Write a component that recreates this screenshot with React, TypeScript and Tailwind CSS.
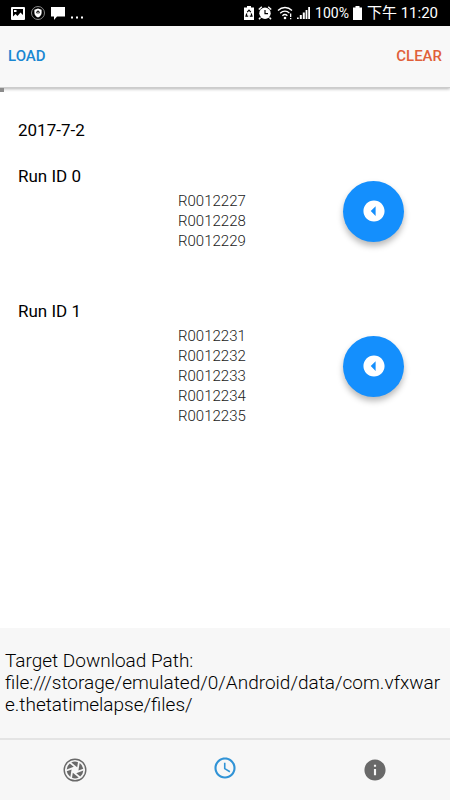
import React from 'react';
import {
  IoMdArrowDropleftCircle,
  IoMdInformationCircle,
  IoMdTime,
} from 'react-icons/io';

interface Run {
  id: number;
  files: string[];
}

const runs: Run[] = [
  { id: 0, files: ['R0012227', 'R0012228', 'R0012229'] },
  { id: 1, files: ['R0012231', 'R0012232', 'R0012233', 'R0012234', 'R0012235'] },
];

const targetPath = 'file:///storage/emulated/0/Android/data/com.vfxware.thetatimelapse/files/';

const bladeAngles = [0, 60, 120, 180, 240, 300];

function ApertureIcon() {
  return (
    <svg viewBox="0 0 24 24" className="h-6 w-6">
      <circle cx="12" cy="12" r="10.8" fill="none" stroke="currentColor" strokeWidth="1.4" />
      {bladeAngles.map((angle) => (
        <path
          key={angle}
          d="M8.3 4.5A8.4 8.4 0 0 1 15 4.200L14.200 9.300z"
          fill="currentColor"
          transform={`rotate(${angle} 12 12)`}
        />
      ))}
    </svg>
  );
}

function StatusBar() {
  return (
    <div className="flex h-[26px] shrink-0 items-center justify-between bg-black pl-[11px] pr-3 text-white">
      <div className="flex items-center gap-[6px]">
        <svg viewBox="0 0 14 13" className="h-[13px] w-[14px]">
          <rect width="14" height="13" rx="1" fill="white" />
          <path d="M2 2h10v6L9.5 5.5 6.5 9 4.5 7 2 9.5z" fill="black" />
          <path d="M3 3h2.5v2H3z" fill="white" />
        </svg>
        <svg viewBox="0 0 14 14" className="h-[14px] w-[14px]">
          <circle cx="7" cy="7" r="6.5" fill="none" stroke="#aaa" strokeWidth="0.8" />
          <path d="M7 2.6l3.6 1.2v3c0 2.2-1.4 3.8-3.6 4.8-2.2-1-3.6-2.6-3.6-4.8v-3z" fill="white" />
          <circle cx="7" cy="6.2" r="1.6" fill="black" />
          <path d="M6.5 5.8h1V9h-1z" fill="white" />
        </svg>
        <svg viewBox="0 0 14 14" className="h-[14px] w-[14px]">
          <path d="M0 1h14v9.5H6L3 14v-3.5H0z" fill="white" />
        </svg>
        <svg viewBox="0 0 12 14" className="h-[14px] w-3">
          <path d="M0 10.5h2v2H0zM5 10.5h2v2H5zM10 10.5h2v2h-2z" fill="white" />
        </svg>
      </div>
      <div className="flex items-center gap-1">
        <svg viewBox="0 0 10 14" className="h-[14px] w-[10px]">
          <path d="M3 0h4v1.5h3V14H0V1.5h3z" fill="white" />
          <path d="M3.2 6.2L5 4.2l1.8 2M2.8 7.5L2 10.2h2.2M7.2 7.5l.8 2.7H5.8" fill="none" stroke="black" strokeWidth="1.2" />
        </svg>
        <svg viewBox="0 0 14 14" className="h-[14px] w-[14px]">
          <circle cx="7" cy="7.3" r="5.7" fill="white" />
          <path d="M.8 3.5L3.8.8M13.2 3.5L10.2.8M2.5 11.5L1 13.2M11.5 11.5L13 13.2" stroke="white" strokeWidth="1.5" />
          <path d="M7 4v3.6h3" fill="none" stroke="black" strokeWidth="1.2" />
        </svg>
        <svg viewBox="0 0 16 14" className="ml-px h-[14px] w-4">
          <path d="M1 4.5c4-4 10-4 14 0M3.2 7.2c2.8-2.8 6.8-2.8 9.2 0M5.4 9.8c1.5-1.5 3.5-1.5 5 0" fill="none" stroke="white" strokeWidth="1.3" />
          <circle cx="8" cy="12" r="1.3" fill="white" />
          <path d="M13 7.5h1.3V11H13zM13 12h1.3v1.3H13z" fill="white" />
        </svg>
        <svg viewBox="0 0 13 14" className="h-[14px] w-[13px]">
          <path d="M0 11.5h1.7V13H0zM2.8 9h2v4h-2zM5.8 6.5h2V13h-2zM8.6 4h1.8v9H8.6zM11.2 1H13v12h-1.8z" fill="white" />
        </svg>
        <span className="ml-px text-sm">100%</span>
        <svg viewBox="0 0 9 14" className="h-[14px] w-[9px]">
          <path d="M2.5 0h4v1.5H9V14H0V1.5h2.5z" fill="white" />
        </svg>
        <span className="ml-px whitespace-nowrap text-[15px]">下午 11:20</span>
      </div>
    </div>
  );
}

function RunItem({ run }: { run: Run }) {
  return (
    <section className="flex items-center justify-between">
      <div>
        <h2 className="text-[17px] leading-[22px]">Run ID {run.id}</h2>
        <ul className="mt-1 pl-40 text-[15px] font-light leading-5 text-[#222]">
          {run.files.map((file) => (
            <li key={file}>{file}</li>
          ))}
        </ul>
      </div>
      <button
        type="button"
        aria-label={`Download run ${run.id}`}
        className="mr-7 mt-1.5 flex h-[61px] w-[61px] items-center justify-center rounded-full bg-[#148ffd] text-white shadow-[0_4px_6px_rgba(0,0,0,0.28)]"
      >
        <IoMdArrowDropleftCircle className="h-[26px] w-[26px]" />
      </button>
    </section>
  );
}

export default function App() {
  return (
    <div className="flex min-h-screen flex-col bg-white font-['Roboto','Noto_Sans_CJK_TC',sans-serif] text-black">
      <StatusBar />
      <header className="flex h-[62px] shrink-0 items-center justify-between border-b border-[#ccc] bg-[#f8f8f8] px-2 text-[15px] font-medium shadow-[0_1px_3px_rgba(0,0,0,0.3)]">
        <button type="button" className="text-[#1a87d2]">
          LOAD
        </button>
        <button type="button" className="text-[#e0603a]">
          CLEAR
        </button>
      </header>
      <div className="h-1 w-1 bg-[#8c8c8c]" />

      <main className="flex-1 px-[18px] pt-[27px]">
        <h1 className="text-[17px] leading-[22px]">2017-7-2</h1>
        <div className="mt-6 flex flex-col gap-[49px]">
          {runs.map((run) => (
            <RunItem key={run.id} run={run} />
          ))}
        </div>
      </main>

      <footer className="shrink-0 bg-[#f7f7f7]">
        <div className="break-all px-[5px] py-[22px] text-[19px] font-light leading-[22px]">
          <p>Target Download Path:</p>
          <p>{targetPath}</p>
        </div>
        <nav className="grid h-[62px] grid-cols-3 border-t-2 border-[#e4e4e4] text-[#696969]">
          <button type="button" aria-label="Camera" className="flex items-center justify-center">
            <ApertureIcon />
          </button>
          <button type="button" aria-label="Time lapse" className="flex items-center justify-center pb-1 text-[#1a87d2]">
            <IoMdTime className="h-[26px] w-[26px]" />
          </button>
          <button type="button" aria-label="About" className="flex items-center justify-center">
            <IoMdInformationCircle className="h-[26px] w-[26px]" />
          </button>
        </nav>
      </footer>
    </div>
  );
}
